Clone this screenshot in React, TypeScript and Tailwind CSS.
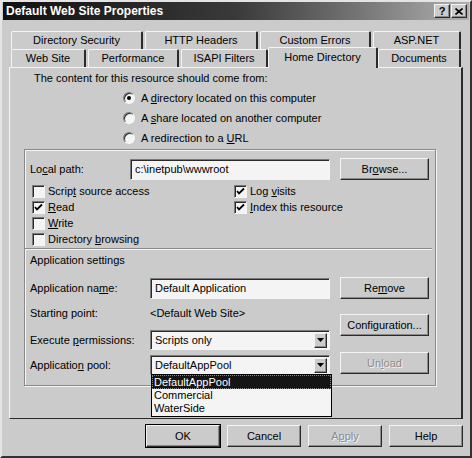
const raised =
  "border border-t-[#f4f4f4] border-l-[#f4f4f4] border-r-[#2a2a2a] border-b-[#2a2a2a] shadow-[inset_-1px_-1px_0_#8a8a8a]";
const sunken =
  "border border-t-[#7a7a7a] border-l-[#7a7a7a] border-r-[#f6f6f6] border-b-[#f6f6f6] shadow-[inset_1px_1px_0_#2a2a2a]";

function Btn({ children, className = "", disabled = false }: { children: React.ReactNode; className?: string; disabled?: boolean }) {
  return (
    <div
      className={`flex h-[22px] items-center justify-center bg-[#cbcbcb] ${raised} ${
        disabled ? "text-[#8c8c8c] [text-shadow:1px_1px_0_#f4f4f4]" : "text-black"
      } ${className}`}
    >
      {children}
    </div>
  );
}

function Tab({ children, className = "" }: { children: React.ReactNode; className?: string }) {
  return (
    <div
      className={`flex h-[18px] items-center justify-center rounded-t-[2px] border-t border-l border-r-2 border-t-[#f4f4f4] border-l-[#f4f4f4] border-r-[#2a2a2a] bg-[#cbcbcb] ${className}`}
    >
      {children}
    </div>
  );
}

function Check({ checked, children }: { checked?: boolean; children: React.ReactNode }) {
  return (
    <div className="flex h-[16px] items-center">
      <div className={`ml-[2px] flex h-[13px] w-[13px] items-center justify-center bg-[#f4f4f4] ${sunken}`}>
        {checked && (
          <svg width="9" height="9" viewBox="0 0 9 9">
            <path d="M1 4l2 2.5L8 1.5" fill="none" stroke="#000" strokeWidth="1.8" />
          </svg>
        )}
      </div>
      <span className="ml-[3px]">{children}</span>
    </div>
  );
}

function Radio({ on, children }: { on?: boolean; children: React.ReactNode }) {
  return (
    <div className="flex h-[20px] items-center">
      <div className={`flex h-[12px] w-[12px] items-center justify-center rounded-full bg-[#f4f4f4] ${sunken}`}>
        {on && <div className="h-[4px] w-[4px] rounded-full bg-black" />}
      </div>
      <span className="ml-[6px]">{children}</span>
    </div>
  );
}

function Select({ value, children }: { value: string; children?: React.ReactNode }) {
  return (
    <div className={`relative flex h-[20px] w-[180px] items-center bg-[#f4f4f4] ${sunken}`}>
      <span className="ml-[4px] flex-1">{value}</span>
      <div className={`mr-[2px] flex h-[15px] w-[13px] items-center justify-center bg-[#cbcbcb] ${raised}`}>
        <svg width="7" height="4" viewBox="0 0 7 4">
          <path d="M0 0h7L3.5 4z" fill="#000" />
        </svg>
      </div>
      {children}
    </div>
  );
}

export default function App() {
  return (
    <div className="flex h-[458px] w-[472px] flex-col border-2 border-t-[#e4e4e4] border-l-[#e4e4e4] border-r-[#333] border-b-[#333] bg-[#cbcbcb] px-[1px] font-['Liberation_Sans',Arial,sans-serif] text-[11px] leading-[13px] text-black">
      {/* title bar */}
      <div className="flex h-[18px] items-center bg-gradient-to-r from-[#111] via-[#3a3a3a] to-[#b0b0b0] pl-[3px] pr-[2px]">
        <span className="flex-1 text-[12px] font-bold text-white">Default Web Site Properties</span>
        <div className={`flex h-[14px] w-[16px] items-center justify-center bg-[#cbcbcb] text-[11px] font-bold ${raised}`}>?</div>
        <div className={`ml-[1px] flex h-[14px] w-[16px] items-center justify-center bg-[#cbcbcb] ${raised}`}>
          <svg width="8" height="7" viewBox="0 0 8 7">
            <path d="M0.5 0.5l7 6M7.5 0.5l-7 6" stroke="#000" strokeWidth="1.6" />
          </svg>
        </div>
      </div>

      {/* tabs */}
      <div className="ml-[8px] mt-[11px] flex gap-[2px]">
        <Tab className="w-[132px]">Directory Security</Tab>
        <Tab className="w-[113px]">HTTP Headers</Tab>
        <Tab className="w-[111px]">Custom Errors</Tab>
        <Tab className="w-[88px]">ASP.NET</Tab>
      </div>
      <div className="relative z-10 ml-[8px] flex h-[18px] items-end gap-[2px]">
        <Tab className="w-[75px]">Web Site</Tab>
        <Tab className="w-[91px]">Performance</Tab>
        <Tab className="w-[87px]">ISAPI Filters</Tab>
        <Tab className="-mx-[2px] -mb-[1px] !h-[21px] w-[110px] items-start pt-[3px]">Home Directory</Tab>
        <Tab className="w-[83px]">Documents</Tab>
      </div>

      {/* panel */}
      <div className="ml-[6px] flex h-[352px] w-[454px] flex-col border border-r-2 border-t-[#f4f4f4] border-l-[#f4f4f4] border-r-[#2a2a2a] border-b-[#2a2a2a] pl-[14px]">
        <div className="flex h-[20px] items-center pl-[10px]">The content for this resource should come from:</div>
        <div className="ml-[99px] flex flex-col">
          <Radio on>
            A <u>d</u>irectory located on this computer
          </Radio>
          <Radio>
            A <u>s</u>hare located on another computer
          </Radio>
          <Radio>
            A redirection to a <u>U</u>RL
          </Radio>
        </div>

        {/* group box */}
        <div className="mt-[1px] flex h-[237px] w-[412px] flex-col border border-[#8a8a8a] shadow-[1px_1px_0_#f4f4f4,inset_1px_1px_0_#f4f4f4]">
          <div className="mt-[8px] flex h-[22px] items-center pl-[5px]">
            <span className="w-[100px]">
              Lo<u>c</u>al path:
            </span>
            <div className={`flex h-[21px] w-[200px] items-center bg-[#f4f4f4] pl-[4px] ${sunken}`}>c:\inetpub\wwwroot</div>
            <Btn className="ml-[10px] w-[89px]">
              Br<u>o</u>wse...
            </Btn>
          </div>

          <div className="mt-[3px] flex pl-[5px]">
            <div className="flex w-[202px] flex-col">
              <Check>
                Scrip<u>t</u> source access
              </Check>
              <Check checked>
                <u>R</u>ead
              </Check>
              <Check>
                <u>W</u>rite
              </Check>
              <Check>
                Directory <u>b</u>rowsing
              </Check>
            </div>
            <div className="flex flex-col">
              <Check checked>
                Log <u>v</u>isits
              </Check>
              <Check checked>
                <u>I</u>ndex this resource
              </Check>
            </div>
          </div>

          <div className="mr-[3px] mt-[1px] h-[2px] border-t border-b border-t-[#8a8a8a] border-b-[#f4f4f4]" />
          <div className="flex h-[20px] items-center pl-[5px]">Application settings</div>

          <div className="mt-[7px] flex pl-[5px]">
            <div className="flex w-[300px] flex-col">
              <div className="flex h-[22px] items-center">
                <span className="w-[120px]">
                  Application na<u>m</u>e:
                </span>
                <div className={`flex h-[21px] w-[180px] items-center bg-[#f4f4f4] pl-[4px] ${sunken}`}>Default Application</div>
              </div>
              <div className="mt-[5px] flex h-[18px] items-center">
                <span className="w-[120px]">Starting point:</span>
                <span>&lt;Default Web Site&gt;</span>
              </div>
              <div className="mt-[8px] flex h-[20px] items-center">
                <span className="w-[120px]">
                  Execute <u>p</u>ermissions:
                </span>
                <Select value="Scripts only" />
              </div>
              <div className="mt-[5px] flex h-[20px] items-center">
                <span className="w-[120px]">
                  Applicatio<u>n</u> pool:
                </span>
                <Select value="DefaultAppPool">
                  <div className="absolute left-0 top-full z-20 flex w-[181px] flex-col border border-black bg-[#f4f4f4] pb-[1px]">
                    <div className="flex h-[14px] items-center bg-[#151515] pl-[2px] text-white outline-1 outline-dotted outline-[#888] -outline-offset-1">
                      DefaultAppPool
                    </div>
                    <div className="flex h-[13px] items-center pl-[2px]">Commercial</div>
                    <div className="flex h-[13px] items-center pl-[2px]">WaterSide</div>
                  </div>
                </Select>
              </div>
            </div>
            <div className="ml-[10px] flex w-[89px] flex-col">
              <Btn>
                Re<u>m</u>ove
              </Btn>
              <Btn className="mt-[15px]">Configuration...</Btn>
              <Btn className="mt-[16px]" disabled>
                Un<u>l</u>oad
              </Btn>
            </div>
          </div>
        </div>
      </div>

      {/* bottom buttons */}
      <div className="mt-[6px] flex justify-end gap-[7px] pr-[6px]">
        <Btn className="w-[74px] outline outline-1 outline-black">OK</Btn>
        <Btn className="w-[74px]">Cancel</Btn>
        <Btn className="w-[74px]" disabled>
          A<u>p</u>ply
        </Btn>
        <Btn className="w-[74px]">Help</Btn>
      </div>
    </div>
  );
}
